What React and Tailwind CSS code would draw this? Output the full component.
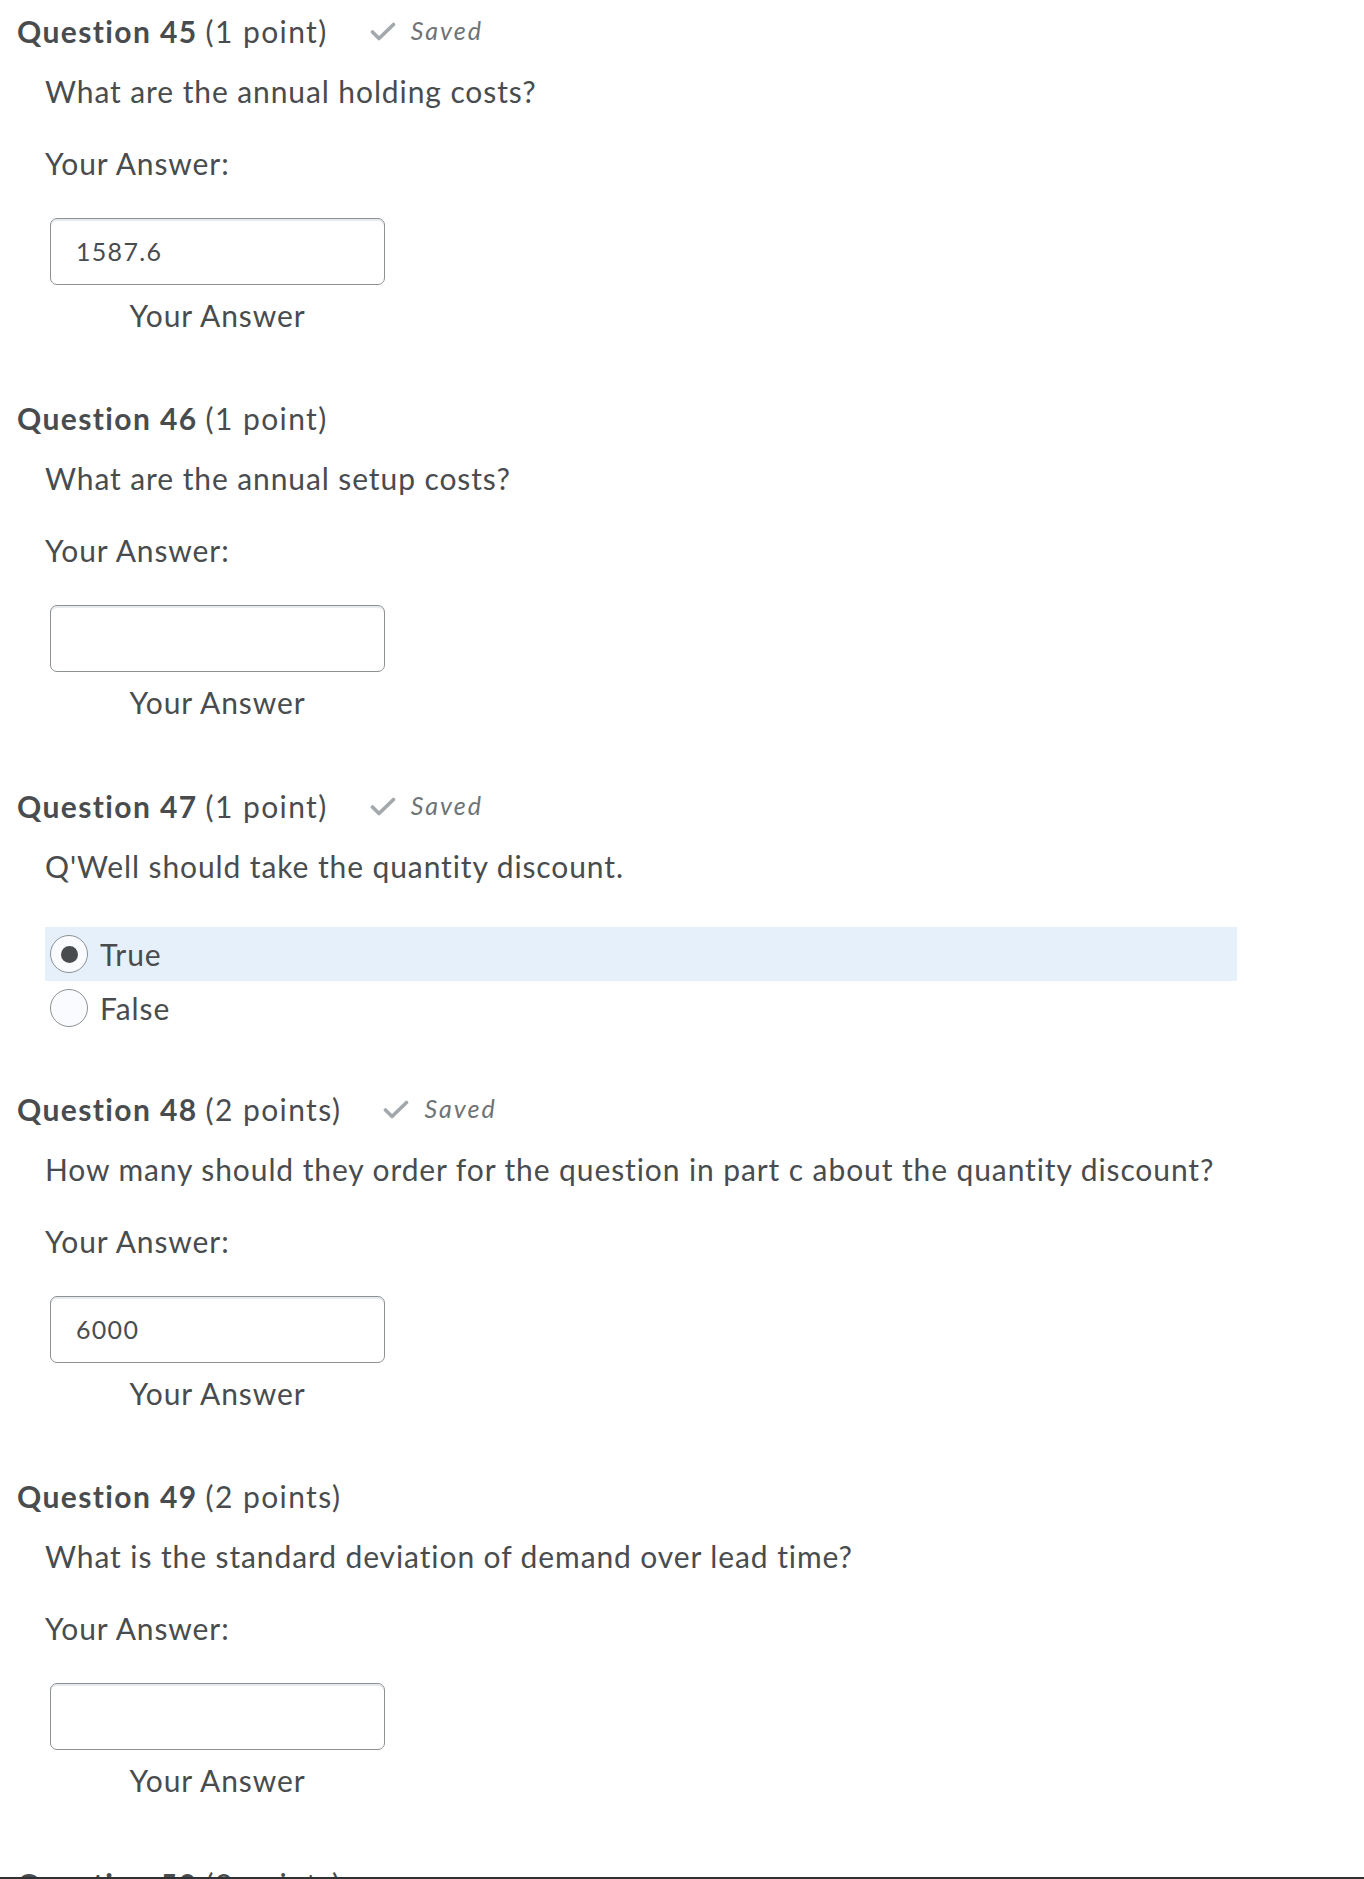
import React from "react";

const FONT = { fontFamily: "Lato, 'Open Sans', sans-serif" };

function Check() {
  return (
    <svg width="26" height="19" viewBox="0 0 26 19" className="shrink-0">
      <path d="M2.5 10 L9 16.5 L23.5 2.5" fill="none" stroke="#a2a8ac" strokeWidth="3.6" strokeLinecap="round" strokeLinejoin="round" />
    </svg>
  );
}

function Heading({ num, pts, saved }) {
  return (
    <div className="h-[40px] flex items-center pl-[17px] text-[30px] tracking-[1.4px] text-[#494c4e]">
      <span className="font-bold">Question {num}</span>
      <span className="ml-[8px]">({pts})</span>
      {saved && (
        <span className="ml-[42px] flex items-center">
          <Check />
          <span className="ml-[15px] italic text-[25px] tracking-[2px] text-[#6e7376]">Saved</span>
        </span>
      )}
    </div>
  );
}

const BODY = "h-[40px] flex items-center pl-[45px] text-[30px] tracking-[0.9px] text-[#494c4e]";

function TextQuestion({ num, pts, saved, text, value }) {
  return (
    <div className="flex flex-col">
      <Heading num={num} pts={pts} saved={saved} />
      <div className={`mt-[20px] ${BODY}`}>{text}</div>
      <div className={`mt-[32px] ${BODY}`}>Your Answer:</div>
      <div className="mt-[35px] pl-[50px]">
        <div className="w-[335px] h-[67px] rounded-[7px] border border-[#8c9194] bg-white shadow-[inset_0_2px_0_0_rgba(205,211,218,0.45)] flex items-center pl-[25px] text-[25px] tracking-[1.3px] text-[#494c4e]">
          {value}
        </div>
      </div>
      <div className="mt-[10px] h-[40px] w-[335px] ml-[50px] flex items-center justify-center text-[30px] tracking-[0.9px] text-[#494c4e]">Your Answer</div>
    </div>
  );
}

function Radio({ checked, label }) {
  return (
    <div className={`h-[54px] w-[1192px] flex items-center pl-[5px] ${checked ? "bg-[#e6f0fb]" : ""}`}>
      <div className="w-[38px] h-[38px] rounded-full border border-[#8c9194] bg-[#f9fbff] flex items-center justify-center shrink-0">
        {checked && <div className="w-[17px] h-[17px] rounded-full bg-[#494c4e]" />}
      </div>
      <span className="ml-[12px] text-[30px] tracking-[0.9px] text-[#494c4e]">{label}</span>
    </div>
  );
}

export default function App() {
  return (
    <div className="relative w-[1364px] h-[1879px] overflow-hidden bg-white" style={FONT}>
      <div className="flex flex-col pt-[11px]">
        <TextQuestion num={45} pts="1 point" saved text="What are the annual holding costs?" value="1587.6" />
        <div className="mt-[63px]">
          <TextQuestion num={46} pts="1 point" text="What are the annual setup costs?" value="" />
        </div>
        <div className="mt-[64px] flex flex-col">
          <Heading num={47} pts="1 point" saved />
          <div className={`mt-[20px] ${BODY}`}>Q'Well should take the quantity discount.</div>
          <div className="mt-[41px] ml-[45px] flex flex-col">
            <Radio checked label="True" />
            <Radio label="False" />
          </div>
        </div>
        <div className="mt-[54px]">
          <TextQuestion num={48} pts="2 points" saved text="How many should they order for the question in part c about the quantity discount?" value="6000" />
        </div>
        <div className="mt-[63px]">
          <TextQuestion num={49} pts="2 points" text="What is the standard deviation of demand over lead time?" value="" />
        </div>
        <div className="mt-[64px]">
          <Heading num={50} pts="2 points" />
        </div>
      </div>
      <div className="absolute left-0 right-0 bottom-0 h-[2px] bg-[#2f3133]" />
    </div>
  );
}
